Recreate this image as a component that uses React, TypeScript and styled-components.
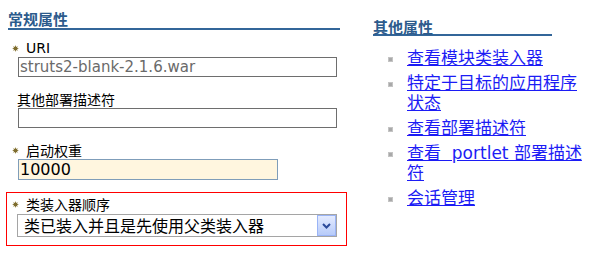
import React from "react";
import styled, { createGlobalStyle } from "styled-components";

const GlobalStyle = createGlobalStyle`
  html, body { margin: 0; padding: 0; background: #ffffff; }
  body { font-family: "Noto Sans CJK SC", "DejaVu Sans", sans-serif; color: #000; }
`;

const Page = styled.div`
  display: flex;
  align-items: flex-start;
  padding-left: 8px;
  width: 590px;
  height: 262px;
  box-sizing: border-box;
  overflow: hidden;
`;

const LeftColumn = styled.section`
  width: 332px;
  padding-top: 10px;
  display: flex;
  flex-direction: column;
`;

const RightColumn = styled.section`
  margin-left: 33px;
  width: 210px;
  padding-top: 19px;
  display: flex;
  flex-direction: column;
`;

const Heading = styled.h2<{ $lineHeight: number; $width?: number }>`
  margin: 0;
  font-family: "Noto Sans CJK SC", sans-serif;
  font-weight: bold;
  font-size: 15px;
  line-height: ${(p) => p.$lineHeight}px;
  color: #2c5b8c;
  border-bottom: 2px solid #336699;
  width: ${(p) => (p.$width ? `${p.$width}px` : "auto")};
`;

const FieldList = styled.div`
  margin-top: 10px;
  display: flex;
  flex-direction: column;
  gap: 14px;
`;

const Field = styled.div`
  display: flex;
  flex-direction: column;
`;

const LabelRow = styled.div<{ $required?: boolean }>`
  display: flex;
  align-items: center;
  height: 17px;
  padding-left: ${(p) => (p.$required ? 4 : 9)}px;
  gap: 7px;
  font-family: "Noto Sans CJK SC", "DejaVu Sans", sans-serif;
  font-size: 14px;
  line-height: 17px;
  color: #000;
`;

const LatinLabel = styled.span`
  font-family: "DejaVu Sans", sans-serif;
  font-size: 14px;
`;

const TextInput = styled.input<{ $width: number; $tone: "plain" | "focus" }>`
  box-sizing: border-box;
  margin: 0 0 0 10px;
  width: ${(p) => p.$width}px;
  height: ${(p) => (p.$tone === "focus" ? 21 : 20)}px;
  padding: 0 0 0 1px;
  border: 1px solid ${(p) => (p.$tone === "focus" ? "#7f9db9" : "#6e6e6e")};
  background: ${(p) => (p.$tone === "focus" ? "#fff6df" : "#ffffff")};
  color: ${(p) => (p.$tone === "focus" ? "#000000" : "#6a6a6a")};
  font-family: "DejaVu Sans", sans-serif;
  font-size: ${(p) => (p.$tone === "focus" ? 16 : 15)}px;
  outline: none;
  border-radius: 0;
`;

const Highlight = styled.div`
  margin-top: -2px;
  margin-left: -2px;
  width: 341px;
  box-sizing: border-box;
  border: 1px solid #ff0000;
  padding: 3px 0 8px 1px;
  display: flex;
  flex-direction: column;
`;

const SelectBox = styled.div`
  box-sizing: border-box;
  margin: 1px 0 0 9px;
  width: 320px;
  height: 23px;
  border: 1px solid #a5a5a5;
  display: flex;
  align-items: stretch;
  background: #fff;
`;

const SelectText = styled.span`
  flex: 1;
  padding-left: 6px;
  font-family: "Noto Sans CJK SC", sans-serif;
  font-size: 16px;
  line-height: 21px;
  color: #000;
`;

const ArrowButton = styled.span`
  box-sizing: border-box;
  width: 19px;
  border: 1px solid #9ab4f6;
  background: linear-gradient(#e4ebff, #b7cbf9);
  display: flex;
  align-items: center;
  justify-content: center;
`;

const LinkList = styled.ul`
  list-style: none;
  margin: 12px 0 0 0;
  padding: 0;
  display: flex;
  flex-direction: column;
  gap: 5px;
`;

const LinkItem = styled.li`
  display: flex;
  align-items: flex-start;
  padding-left: 15px;
`;

const Bullet = styled.span`
  flex: none;
  box-sizing: border-box;
  width: 5px;
  height: 5px;
  margin-top: 9px;
  background: #a9a9a9;
  border: 1px solid #c4c4c4;
`;

const Link = styled.a`
  margin-left: 14px;
  width: 175px;
  font-family: "DejaVu Sans", "Noto Sans CJK SC", sans-serif;
  font-size: 17px;
  line-height: 20px;
  color: #1c1cf5;
  text-decoration: underline;
  cursor: pointer;
`;

const Star = () => (
  <svg width="7" height="7" viewBox="0 0 7 7" aria-hidden="true">
    <path
      d="M3.5 0 L4.3 2.2 L6.3 0.7 L4.8 2.7 L7 3.5 L4.8 4.3 L6.3 6.3 L4.3 4.8 L3.5 7 L2.7 4.8 L0.7 6.3 L2.2 4.3 L0 3.5 L2.2 2.7 L0.7 0.7 L2.7 2.2 Z"
      fill="#968546"
    />
    <circle cx="3.5" cy="3.5" r="2" fill="#7d6c2e" />
  </svg>
);

const Chevron = () => (
  <svg width="9" height="6" viewBox="0 0 9 6" aria-hidden="true">
    <path d="M1 1 L4.5 4.5 L8 1" fill="none" stroke="#2b4a9a" strokeWidth="2" />
  </svg>
);

const links = [
  "查看模块类装入器",
  "特定于目标的应用程序状态",
  "查看部署描述符",
  "查看\u00a0 portlet 部署描述符",
  "会话管理",
];

export default function App() {
  return (
    <>
      <GlobalStyle />
      <Page>
        <LeftColumn>
          <Heading $lineHeight={18}>常规属性</Heading>
          <FieldList>
            <Field>
              <LabelRow $required>
                <Star />
                <LatinLabel>URI</LatinLabel>
              </LabelRow>
              <TextInput $width={319} $tone="plain" readOnly value="struts2-blank-2.1.6.war" />
            </Field>
            <Field>
              <LabelRow>其他部署描述符</LabelRow>
              <TextInput $width={319} $tone="plain" readOnly value="" />
            </Field>
            <Field>
              <LabelRow $required>
                <Star />
                <span>启动权重</span>
              </LabelRow>
              <TextInput $width={260} $tone="focus" readOnly value="10000" />
            </Field>
            <Highlight>
              <LabelRow $required>
                <Star />
                <span>类装入器顺序</span>
              </LabelRow>
              <SelectBox>
                <SelectText>类已装入并且是先使用父类装入器</SelectText>
                <ArrowButton>
                  <Chevron />
                </ArrowButton>
              </SelectBox>
            </Highlight>
          </FieldList>
        </LeftColumn>
        <RightColumn>
          <Heading $lineHeight={15} $width={179}>其他属性</Heading>
          <LinkList>
            {links.map((l) => (
              <LinkItem key={l}>
                <Bullet />
                <Link>{l}</Link>
              </LinkItem>
            ))}
          </LinkList>
        </RightColumn>
      </Page>
    </>
  );
}
